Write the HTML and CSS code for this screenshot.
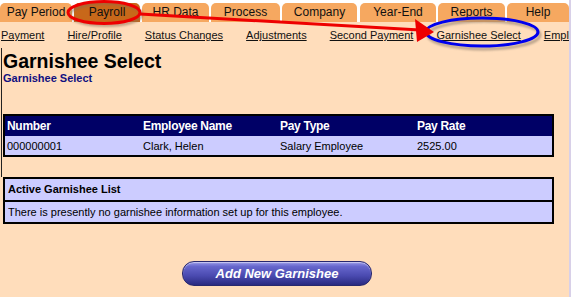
FILE: index.html
```html
<!DOCTYPE html>
<html>
<head>
<meta charset="utf-8">
<link rel="stylesheet" href="styles.css">
</head>
<body>
<div class="page">
  <nav class="tabs">
    <div class="tab t1">Pay Period</div>
    <div class="tab t2 active">Payroll</div>
    <div class="tab t3">HR Data</div>
    <div class="tab t4">Process</div>
    <div class="tab t5">Company</div>
    <div class="tab t6">Year-End</div>
    <div class="tab t7">Reports</div>
    <div class="tab t8">Help</div>
  </nav>
  <nav class="subnav">
    <a href="#">Payment</a>
    <a href="#">Hire/Profile</a>
    <a href="#">Status Changes</a>
    <a href="#">Adjustments</a>
    <a href="#">Second Payment</a>
    <a href="#">Garnishee Select</a>
    <a href="#">Employee</a>
  </nav>
  <div class="content">
    <h1 class="title">Garnishee Select</h1>
    <div class="subtitle">Garnishee Select</div>
    <table class="emp">
      <tr class="head">
        <th class="c1">Number</th>
        <th class="c2">Employee Name</th>
        <th class="c3">Pay Type</th>
        <th>Pay Rate</th>
      </tr>
      <tr class="row">
        <td>000000001</td>
        <td>Clark, Helen</td>
        <td>Salary Employee</td>
        <td>2525.00</td>
      </tr>
    </table>
  </div>
  <div class="list">
    <div class="list-head">Active Garnishee List</div>
    <div class="list-body">There is presently no garnishee information set up for this employee.</div>
  </div>
  <div class="actions">
    <button class="btn">Add New Garnishee</button>
  </div>
</div>
<svg class="annot" width="571" height="297" viewBox="0 0 571 297">
  <defs>
    <filter id="sh" x="-20%" y="-40%" width="140%" height="180%">
      <feGaussianBlur stdDeviation="1.2"/>
    </filter>
  </defs>
  <ellipse cx="106" cy="14.5" rx="36" ry="11" fill="none" stroke="#8a6a50" stroke-width="3" opacity="0.55" filter="url(#sh)"/>
  <ellipse cx="104" cy="12.5" rx="36" ry="11" fill="none" stroke="#ee0000" stroke-width="3"/>
  <ellipse cx="484" cy="35" rx="56" ry="14" fill="none" stroke="#8a7a6a" stroke-width="3" opacity="0.6" filter="url(#sh)"/>
  <ellipse cx="482" cy="32" rx="56" ry="14" fill="none" stroke="#0000ee" stroke-width="3"/>
  <line x1="140" y1="14" x2="420" y2="30" stroke="#ee0000" stroke-width="3"/>
  <polygon points="415,19 434,32 417,42" fill="#ee0000"/>
</svg>
</body>
</html>
```
FILE: styles.css
```css
html, body {
  margin: 0;
  padding: 0;
  background: #ffddbb;
}
body {
  width: 571px;
  height: 297px;
  overflow: hidden;
  position: relative;
  font-family: "Liberation Sans", Arial, sans-serif;
  color: #000;
}
.page {
  width: 569px;
  height: 297px;
  border-right: 2px solid #d8d0e8;
}
.tabs {
  display: flex;
  height: 22px;
  background: #ffffff;
  align-items: flex-end;
}
.tab {
  height: 19px;
  background: #f6a860;
  border-radius: 5px 5px 0 0;
  font-size: 12px;
  line-height: 19px;
  text-align: center;
  color: #111;
  margin-right: 2px;
}
.tab.active { background: #c8681a; }
.t1 { width: 72px; }
.t2 { width: 66px; }
.t3 { width: 67px; }
.t4 { width: 69px; }
.t5 { width: 75px; margin-right: 3px; }
.t6 { width: 76px; }
.t7 { width: 67px; }
.t8 { width: 62px; margin-right: 0; }
.subnav {
  display: flex;
  height: 26px;
  padding-left: 1px;
  white-space: nowrap;
  overflow: hidden;
  align-items: center;
}
.subnav a {
  font-size: 11px;
  color: #111;
  text-decoration: underline;
  margin-right: 23px;
  flex-shrink: 0;
}
.content {
  margin-left: 1px;
  border-left: 1px solid #222;
  padding: 2px 0 20px 1px;
  width: 560px;
}
.title {
  margin: 0;
  font-size: 19.5px;
  line-height: 22px;
  font-weight: bold;
}
.subtitle {
  font-size: 11px;
  font-weight: bold;
  color: #101080;
  line-height: 12px;
  margin-bottom: 30px;
}
.emp {
  border-collapse: collapse;
  border: 2px solid #000;
  width: 551px;
  font-size: 11px;
}
.emp th, .emp td {
  text-align: left;
  padding: 0 0 0 2px;
}
.head { background: #000066; color: #fff; height: 21px; }
.head th { font-size: 12px; font-weight: bold; letter-spacing: -0.3px; }
.row { background: #ccccff; height: 20px; border-top: 1px solid #ccccff; }
.c1 { width: 134px; }
.c2 { width: 135px; }
.c3 { width: 135px; }
.list {
  margin-left: 3px;
  width: 547px;
  border: 2px solid #000;
  background: #ccccff;
  font-size: 11px;
}
.list-head {
  font-weight: bold;
  height: 21px;
  line-height: 21px;
  padding-left: 3px;
  border-bottom: 2px solid #000;
}
.list-body {
  height: 20px;
  line-height: 20px;
  padding-left: 3px;
}
.actions {
  display: flex;
  padding: 37px 0 0 182px;
}
.btn {
  width: 190px;
  height: 25px;
  border: 1px solid #28286e;
  border-radius: 12px;
  background: linear-gradient(#9898e8 0%, #6666cc 20%, #4a4ab0 60%, #2a2a80 100%);
  color: #fff;
  font-family: "Liberation Sans", Arial, sans-serif;
  font-size: 13px;
  font-weight: bold;
  font-style: italic;
  padding: 0;
  box-shadow: inset 0 1px 1px rgba(255,255,255,0.5);
}
.annot {
  position: absolute;
  left: 0;
  top: 0;
  pointer-events: none;
}
```
